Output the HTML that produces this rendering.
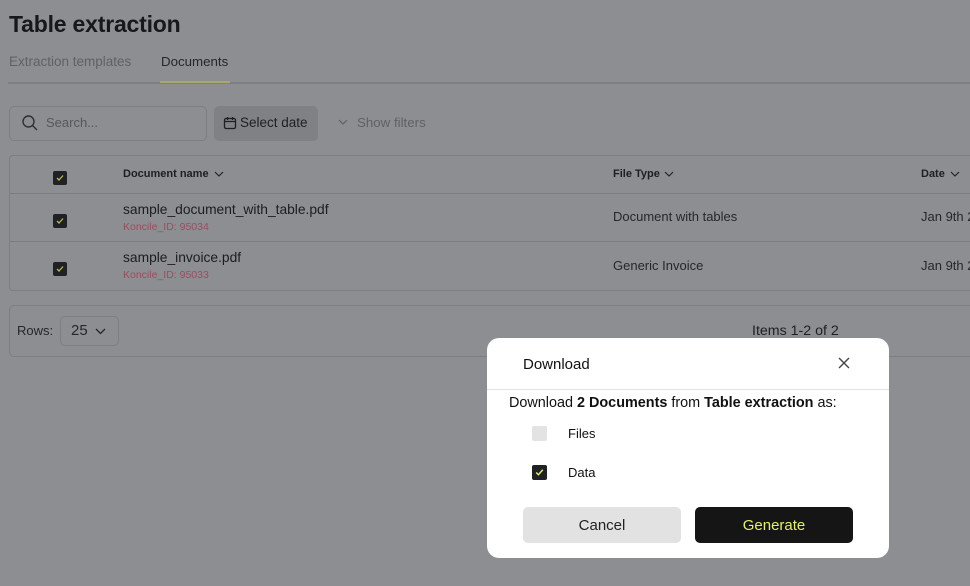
<!DOCTYPE html>
<html><head><meta charset="utf-8"><style>
*{box-sizing:border-box;margin:0;padding:0}
body{width:970px;height:586px;overflow:hidden;background:#8c8e92;font-family:"Liberation Sans",sans-serif;color:#1c1d20;position:relative}
.a{position:absolute;white-space:nowrap}
.cb{position:absolute;width:14px;height:14px;background:#1f2124;border-radius:2px}
.cb svg{position:absolute;left:2px;top:2px}
.line{position:absolute;height:1px;background:#7b7d81}
</style></head><body>
<div class="a" style="left:9px;top:11px;font-size:23px;font-weight:bold;color:#17181b;letter-spacing:-0.2px">Table extraction</div>
<div class="a" style="left:9px;top:54px;font-size:13.5px;color:#5f6165">Extraction templates</div>
<div class="a" style="left:161px;top:54px;font-size:13.3px;color:#26272a">Documents</div>
<div class="line" style="left:8px;top:82px;width:962px;height:2px;background:#7d7f83"></div>
<div style="position:absolute;left:160px;top:81px;width:70px;height:2px;background:#a8a86a"></div>

<div style="position:absolute;left:9px;top:106px;width:198px;height:35px;border:1px solid #7c7e82;border-radius:5px"></div>
<svg class="a" style="left:21px;top:114px" width="18" height="18" viewBox="0 0 18 18" fill="none" stroke="#2e3034" stroke-width="1.4"><circle cx="7.5" cy="7.5" r="5.5"/><path d="M11.5 11.5L16 16"/></svg>
<div class="a" style="left:46px;top:115px;font-size:13px;color:#55575b">Search...</div>
<div style="position:absolute;left:214px;top:106px;width:104px;height:35px;background:#7f8185;border-radius:5px"></div>
<svg class="a" style="left:223px;top:116px" width="14" height="14" viewBox="0 0 14 14" fill="none" stroke="#1e1f22" stroke-width="1.3"><rect x="1.5" y="2.5" width="11" height="10" rx="1.5"/><path d="M1.5 5.5h11M4.5 1v3M9.5 1v3"/></svg>
<div class="a" style="left:240px;top:115px;font-size:13.5px;color:#1e1f22">Select date</div>
<svg class="a" style="left:338px;top:119px" width="10" height="7" viewBox="0 0 10 7" fill="none" stroke="#5f6165" stroke-width="1.2"><path d="M1 1l4 4 4-4"/></svg>
<div class="a" style="left:357px;top:115px;font-size:13.3px;color:#5f6165">Show filters</div>

<div style="position:absolute;left:9px;top:155px;width:970px;height:136px;border:1px solid #7c7e82;border-right:none;border-radius:4px 0 0 4px"></div>
<div class="line" style="left:10px;top:193px;width:960px"></div>
<div class="line" style="left:10px;top:241px;width:960px"></div>
<div class="cb" style="left:53px;top:171px"><svg width="10" height="10" viewBox="0 0 10 10" fill="none" stroke="#b6b84a" stroke-width="1.3"><path d="M2 5l2 2 4-4.5"/></svg></div>
<div class="a" style="left:123px;top:168px;font-size:11px;font-weight:bold;color:#1e1f22">Document name</div>
<svg class="a" style="left:214px;top:171px" width="10" height="7" viewBox="0 0 10 7" fill="none" stroke="#1e1f22" stroke-width="1.1"><path d="M1 1l4 4 4-4"/></svg>
<div class="a" style="left:613px;top:168px;font-size:11px;font-weight:bold;color:#1e1f22">File Type</div>
<svg class="a" style="left:664px;top:171px" width="10" height="7" viewBox="0 0 10 7" fill="none" stroke="#1e1f22" stroke-width="1.1"><path d="M1 1l4 4 4-4"/></svg>
<div class="a" style="left:921px;top:168px;font-size:11px;font-weight:bold;color:#1e1f22">Date</div>
<svg class="a" style="left:950px;top:171px" width="10" height="7" viewBox="0 0 10 7" fill="none" stroke="#1e1f22" stroke-width="1.1"><path d="M1 1l4 4 4-4"/></svg>

<div class="cb" style="left:53px;top:214px"><svg width="10" height="10" viewBox="0 0 10 10" fill="none" stroke="#b6b84a" stroke-width="1.3"><path d="M2 5l2 2 4-4.5"/></svg></div>
<div class="a" style="left:123px;top:202px;font-size:13.8px;color:#1c1d20">sample_document_with_table.pdf</div>
<div class="a" style="left:123px;top:221px;font-size:10.5px;color:#9a4d5d">Koncile_ID: 95034</div>
<div class="a" style="left:613px;top:209px;font-size:13px;color:#26272a">Document with tables</div>
<div class="a" style="left:921px;top:209px;font-size:13px;color:#26272a">Jan 9th 2</div>

<div class="cb" style="left:53px;top:262px"><svg width="10" height="10" viewBox="0 0 10 10" fill="none" stroke="#b6b84a" stroke-width="1.3"><path d="M2 5l2 2 4-4.5"/></svg></div>
<div class="a" style="left:123px;top:250px;font-size:13.8px;color:#1c1d20">sample_invoice.pdf</div>
<div class="a" style="left:123px;top:269px;font-size:10.5px;color:#9a4d5d">Koncile_ID: 95033</div>
<div class="a" style="left:613px;top:258px;font-size:13px;color:#26272a">Generic Invoice</div>
<div class="a" style="left:921px;top:258px;font-size:13px;color:#26272a">Jan 9th 2</div>

<div style="position:absolute;left:9px;top:305px;width:970px;height:52px;border:1px solid #7c7e82;border-right:none;border-radius:5px 0 0 5px"></div>
<div class="a" style="left:17px;top:323px;font-size:13px;color:#26272a">Rows:</div>
<div style="position:absolute;left:60px;top:316px;width:59px;height:30px;border:1px solid #7c7e82;border-radius:5px"></div>
<div class="a" style="left:71px;top:322px;font-size:15px;color:#26272a">25</div>
<svg class="a" style="left:95px;top:328px" width="11" height="7" viewBox="0 0 11 7" fill="none" stroke="#26272a" stroke-width="1.3"><path d="M1 1l4.5 4.5L10 1"/></svg>
<div class="a" style="left:752px;top:323px;font-size:14.2px;color:#1e1f22">Items 1-2 of 2</div>

<div style="position:absolute;left:487px;top:338px;width:402px;height:220px;background:#fff;border-radius:12px"></div>
<div class="a" style="left:523px;top:356px;font-size:15px;color:#111">Download</div>
<svg class="a" style="left:837px;top:356px" width="14" height="14" viewBox="0 0 14 14" fill="none" stroke="#444" stroke-width="1.4"><path d="M2 2l10 10M12 2L2 12"/></svg>
<div style="position:absolute;left:487px;top:389px;width:402px;height:1px;background:#e2e2e2"></div>
<div class="a" style="left:509px;top:395px;font-size:14.4px;color:#111">Download <b>2 Documents</b> from <b>Table extraction</b> as:</div>
<div style="position:absolute;left:532px;top:426px;width:15px;height:15px;background:#e3e3e3;border-radius:2px"></div>
<div class="a" style="left:568px;top:426px;font-size:13px;color:#111">Files</div>
<div class="cb" style="left:532px;top:465px;width:15px;height:15px"><svg width="11" height="11" viewBox="0 0 10 10" fill="none" stroke="#e4f06a" stroke-width="1.3"><path d="M2 5l2 2 4-4.5"/></svg></div>
<div class="a" style="left:568px;top:465px;font-size:13px;color:#111">Data</div>
<div style="position:absolute;left:523px;top:507px;width:158px;height:36px;background:#e2e2e2;border-radius:5px;text-align:center;line-height:38px;font-size:15px;color:#222">Cancel</div>
<div style="position:absolute;left:695px;top:507px;width:158px;height:36px;background:#151515;border-radius:5px;text-align:center;line-height:38px;font-size:15px;color:#e4f06a">Generate</div>
</body></html>
